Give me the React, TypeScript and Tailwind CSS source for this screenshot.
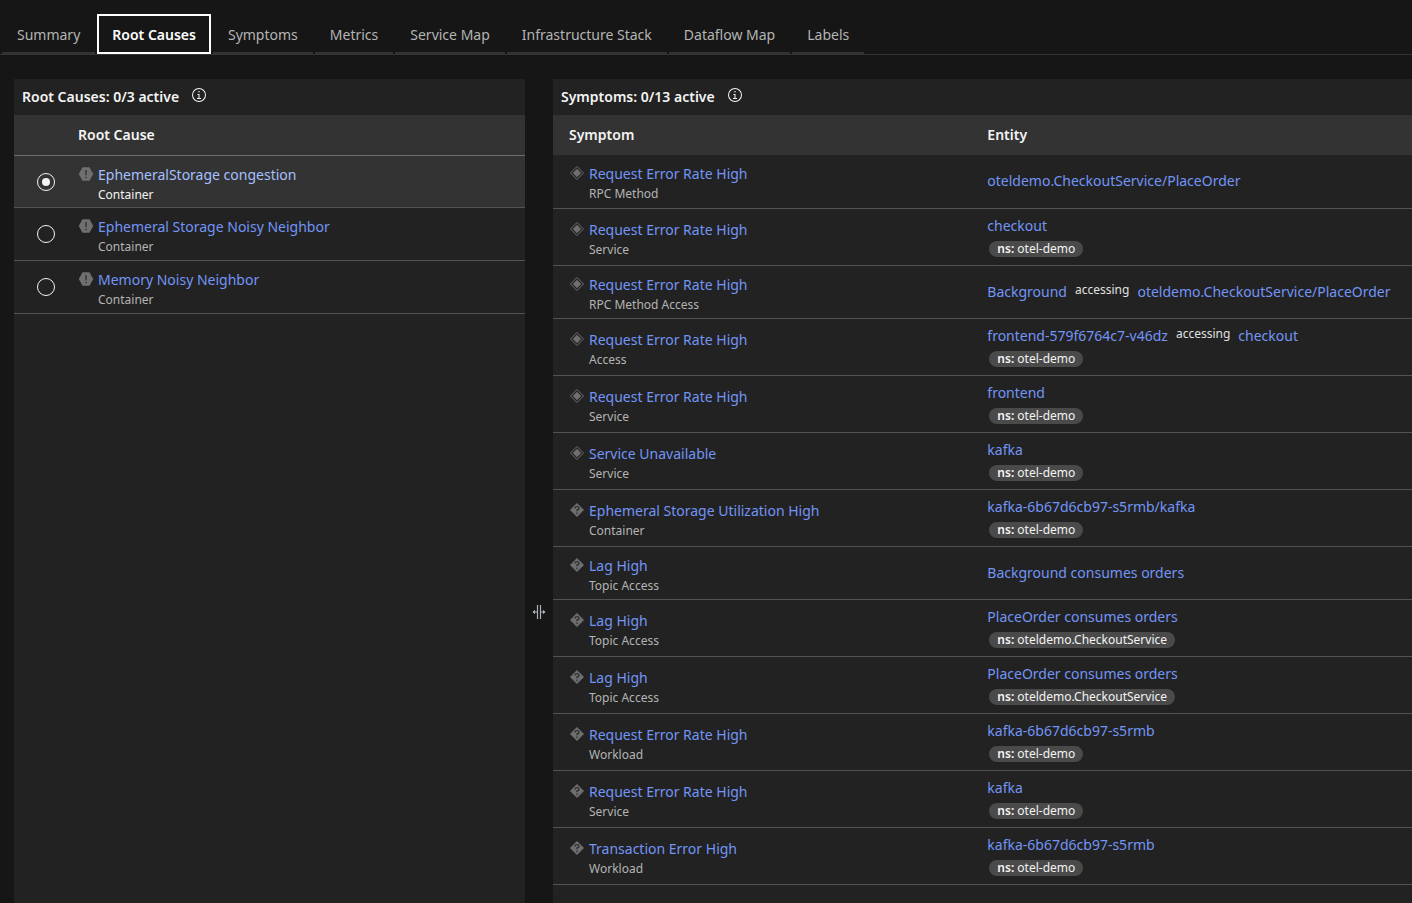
import { FC, useState } from 'react'
import clsx from 'clsx'

const TABS = [
  'Summary',
  'Root Causes',
  'Symptoms',
  'Metrics',
  'Service Map',
  'Infrastructure Stack',
  'Dataflow Map',
  'Labels',
]

const ROOT_CAUSES = [
  { name: 'EphemeralStorage congestion', kind: 'Container' },
  { name: 'Ephemeral Storage Noisy Neighbor', kind: 'Container' },
  { name: 'Memory Noisy Neighbor', kind: 'Container' },
]

type Severity = 'medium' | 'unknown'

interface Symptom {
  name: string;
  kind: string;
  severity: Severity;
  entity: string;
  target?: string;
  ns?: string;
}

const SYMPTOMS: Symptom[] = [
  { name: 'Request Error Rate High', kind: 'RPC Method', severity: 'medium', entity: 'oteldemo.CheckoutService/PlaceOrder' },
  { name: 'Request Error Rate High', kind: 'Service', severity: 'medium', entity: 'checkout', ns: 'otel-demo' },
  { name: 'Request Error Rate High', kind: 'RPC Method Access', severity: 'medium', entity: 'Background', target: 'oteldemo.CheckoutService/PlaceOrder' },
  { name: 'Request Error Rate High', kind: 'Access', severity: 'medium', entity: 'frontend-579f6764c7-v46dz', target: 'checkout', ns: 'otel-demo' },
  { name: 'Request Error Rate High', kind: 'Service', severity: 'medium', entity: 'frontend', ns: 'otel-demo' },
  { name: 'Service Unavailable', kind: 'Service', severity: 'medium', entity: 'kafka', ns: 'otel-demo' },
  { name: 'Ephemeral Storage Utilization High', kind: 'Container', severity: 'unknown', entity: 'kafka-6b67d6cb97-s5rmb/kafka', ns: 'otel-demo' },
  { name: 'Lag High', kind: 'Topic Access', severity: 'unknown', entity: 'Background consumes orders' },
  { name: 'Lag High', kind: 'Topic Access', severity: 'unknown', entity: 'PlaceOrder consumes orders', ns: 'oteldemo.CheckoutService' },
  { name: 'Lag High', kind: 'Topic Access', severity: 'unknown', entity: 'PlaceOrder consumes orders', ns: 'oteldemo.CheckoutService' },
  { name: 'Request Error Rate High', kind: 'Workload', severity: 'unknown', entity: 'kafka-6b67d6cb97-s5rmb', ns: 'otel-demo' },
  { name: 'Request Error Rate High', kind: 'Service', severity: 'unknown', entity: 'kafka', ns: 'otel-demo' },
  { name: 'Transaction Error High', kind: 'Workload', severity: 'unknown', entity: 'kafka-6b67d6cb97-s5rmb', ns: 'otel-demo' },
]

const InfoIcon = () => (
  <svg viewBox="0 0 32 32" className="size-4" fill="currentColor" aria-hidden="true">
    <path d="M17 22V14H13V16H15V22H12V24H20V22ZM16 8a1.5 1.5 0 1 0 1.5 1.5A1.5 1.5 0 0 0 16 8Z" />
    <path d="M16 30A14 14 0 1 1 30 16 14 14 0 0 1 16 30ZM16 4A12 12 0 1 0 28 16 12 12 0 0 0 16 4Z" />
  </svg>
)

const WarningHexIcon = () => (
  <svg viewBox="0 0 32 32" className="size-4 shrink-0 text-[#6f6f6f]" aria-hidden="true">
    <path d="M9 2.5H23L30.5 16L23 29.5H9L1.5 16Z" fill="currentColor" />
    <path d="M16 8V18.5" stroke="#2b2b2b" strokeWidth="2.5" />
    <circle cx="16" cy="23" r="1.6" fill="#2b2b2b" />
  </svg>
)

const SeverityIcon: FC<{ severity: Severity }> = ({ severity }) => (
  <svg viewBox="0 0 32 32" className="size-4 shrink-0 text-[#6f6f6f]" aria-hidden="true">
    {severity === 'medium' ? (
      <>
        <path d="M16 3L29 16L16 29L3 16Z" fill="none" stroke="currentColor" strokeWidth="2" strokeLinejoin="round" />
        <path d="M16 7.5L24.5 16L16 24.5L7.5 16Z" fill="currentColor" />
      </>
    ) : (
      <>
        <path d="M16 3L29 16L16 29L3 16Z" fill="currentColor" stroke="currentColor" strokeWidth="2" strokeLinejoin="round" />
        <path d="M12.2 13V12.5A3 3 0 0 1 15 9.5H17A3 3 0 0 1 17 15.5H16V18.5" fill="none" stroke="#222222" strokeWidth="2.2" />
        <circle cx="16" cy="22.5" r="1.5" fill="#222222" />
      </>
    )}
  </svg>
)

const ResizeIcon = () => (
  <svg viewBox="0 0 16 16" className="size-4 text-[#a8b0b8]" fill="none" stroke="currentColor" aria-hidden="true">
    <path d="M6.5 1V15M9.5 1V15" strokeWidth="1.2" />
    <path d="M6 8H2M10 8H14" strokeWidth="1.2" />
    <path d="M4 5.8L1.5 8L4 10.2ZM12 5.8L14.5 8L12 10.2Z" fill="currentColor" stroke="none" />
  </svg>
)

const PanelTitle: FC<{ children: string }> = ({ children }) => (
  <div className="flex h-9 items-center gap-3 px-2">
    <h2 className="text-sm font-semibold">{children}</h2>
    <button aria-label={`About ${children}`} className="pb-1"><InfoIcon /></button>
  </div>
)

const NameCell: FC<{ icon: React.ReactNode; name: string; kind: string; selected?: boolean }> = ({ icon, name, kind, selected }) => (
  <div className="flex items-start gap-1 pt-1.5">
    <span className="pt-px">{icon}</span>
    <div>
      <a href="#" className={clsx('block text-sm leading-5', selected ? 'text-[#a6c0ff]' : 'text-[#7295f6]')}>{name}</a>
      <p className={clsx('text-xs leading-5', selected ? 'text-[#f4f4f4]' : 'text-[#b4b4b4]')}>{kind}</p>
    </div>
  </div>
)

export default function App() {
  const [tab, setTab] = useState('Root Causes')
  const [selected, setSelected] = useState(0)

  return (
    <div className="flex min-h-screen flex-col bg-[#161616] pt-3.5 font-['Noto_Sans',sans-serif] text-[#f4f4f4]">
      {/* Tabs */}
      <div role="tablist" className="flex items-start gap-0.5 border-b border-[#333333] px-0.5">
        {TABS.map(label => (
          <button
            key={label}
            role="tab"
            aria-selected={label === tab}
            onClick={() => setTab(label)}
            className={clsx(
              'h-10 text-sm whitespace-nowrap',
              label === tab
                ? 'border-2 border-white px-[13px] pt-0.5 font-semibold text-white'
                : 'border-b-2 border-[#333333] px-[15px] pt-1 text-[#b4b4b4]'
            )}
          >
            {label}
          </button>
        ))}
      </div>

      <main className="grid flex-1 grid-cols-[511fr_28px_859fr] pt-6 pl-3.5">
        {/* Root causes */}
        <section className="bg-[#222222]">
          <PanelTitle>Root Causes: 0/3 active</PanelTitle>
          <table className="w-full table-fixed border-separate border-spacing-0 text-left">
            <thead>
              <tr className="h-10 bg-[#333333] text-sm">
                <th className="w-16" aria-label="Select" />
                <th className="font-semibold">Root Cause</th>
              </tr>
            </thead>
            <tbody>
              {ROOT_CAUSES.map((cause, i) => (
                <tr
                  key={cause.name}
                  className={clsx(
                    'h-[53px] [&>td]:border-b [&>td]:border-[#525252]',
                    i === selected && 'bg-[#333333] [&>td]:border-t [&>td]:border-t-[#6f6f6f]'
                  )}
                >
                  <td className="align-middle">
                    <input
                      type="radio"
                      name="root-cause"
                      aria-label={cause.name}
                      checked={i === selected}
                      onChange={() => setSelected(i)}
                      className="mx-auto block size-[18px] appearance-none rounded-full border border-[#f4f4f4] bg-clip-content p-1 checked:bg-[#f4f4f4]"
                    />
                  </td>
                  <td className="align-middle">
                    <NameCell icon={<WarningHexIcon />} name={cause.name} kind={cause.kind} selected={i === selected} />
                  </td>
                </tr>
              ))}
            </tbody>
          </table>
        </section>

        {/* Resize handle */}
        <div className="flex justify-center pt-[525px]">
          <button aria-label="Resize panels" className="size-4 cursor-col-resize"><ResizeIcon /></button>
        </div>

        {/* Symptoms */}
        <section className="bg-[#222222]">
          <PanelTitle>Symptoms: 0/13 active</PanelTitle>
          <table className="w-full table-fixed text-left">
            <thead>
              <tr className="h-10 bg-[#333333] text-sm">
                <th className="w-[48.7%] pl-4 font-semibold">Symptom</th>
                <th className="pl-4 font-semibold">Entity</th>
              </tr>
            </thead>
            <tbody>
              {SYMPTOMS.map((s, i) => (
                <tr key={i} className={clsx('border-b border-[#525252]', s.ns ? 'h-[57px]' : 'h-[53px]')}>
                  <td className="pl-4 align-middle">
                    <NameCell icon={<SeverityIcon severity={s.severity} />} name={s.name} kind={s.kind} />
                  </td>
                  <td className="pl-4 align-middle">
                    <div className="flex gap-2 text-sm leading-5 whitespace-nowrap">
                      <a href="#" className="text-[#7295f6]">{s.entity}</a>
                      {s.target && (
                        <>
                          <span className="text-xs text-[#e0e0e0]">accessing</span>
                          <a href="#" className="text-[#7295f6]">{s.target}</a>
                        </>
                      )}
                    </div>
                    {s.ns && (
                      <div className="flex pt-[5px] pl-0.5">
                        <span className="rounded-full bg-[#4a4a4a] px-2 text-xs leading-4">
                          <b className="font-semibold">ns:</b> {s.ns}
                        </span>
                      </div>
                    )}
                  </td>
                </tr>
              ))}
            </tbody>
          </table>
        </section>
      </main>
    </div>
  )
}
